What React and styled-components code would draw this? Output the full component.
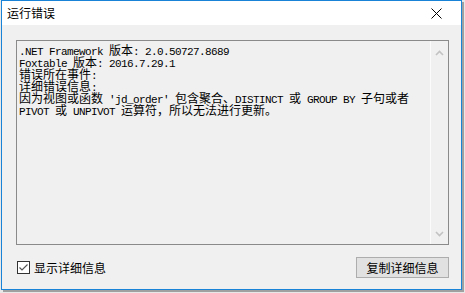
import React from 'react'
import styled, { createGlobalStyle } from 'styled-components'

const GlobalStyle = createGlobalStyle`
  html, body {
    margin: 0;
    padding: 0;
    background: #e8e8e8;
  }
  body {
    width: 465px;
    height: 293px;
    overflow: hidden;
  }
`

const Window = styled.div`
  box-sizing: border-box;
  width: 461px;
  height: 290px;
  margin-left: 1px;
  border: 1px solid #1883d7;
  background: #f0f0f0;
  box-shadow: 2px 2px 0 #a0a0a0;
  display: flex;
  flex-direction: column;
  font-family: "Noto Sans CJK SC", sans-serif;
  font-size: 12px;
  color: #000;
`

const TitleBar = styled.div`
  height: 24px;
  background: #fff;
  display: flex;
  align-items: center;
  justify-content: space-between;
  padding-left: 5px;
`

const Title = styled.span`
  font-size: 12px;
  line-height: 24px;
`

const CloseButton = styled.div`
  width: 46px;
  height: 24px;
  display: flex;
  align-items: center;
  justify-content: center;
  margin-right: 2px;
`

const Body = styled.div`
  flex: 1;
  display: flex;
  flex-direction: column;
  padding: 15px 12px 12px 14px;
  gap: 12px;
`

const TextBox = styled.div`
  box-sizing: border-box;
  height: 205px;
  border: 1px solid #8a8a8a;
  display: flex;
`

const TextArea = styled.div`
  flex: 1;
  padding: 3px 2px;
  font-family: "Liberation Mono", monospace;
  font-size: 11px;
  letter-spacing: -0.6px;
  line-height: 12px;
  white-space: pre;
`

const Line = styled.div`
  height: 12px;
  line-height: 12px;
`

const Cjk = styled.span`
  font-family: "Noto Sans CJK SC", sans-serif;
  font-size: 12px;
  line-height: 12px;
  letter-spacing: 0;
`

const ScrollBar = styled.div`
  width: 17px;
  border-left: 1px solid #fbfbfb;
  display: flex;
  flex-direction: column;
  justify-content: space-between;
  align-items: center;
  padding: 9px 0 7px;
`

const Footer = styled.div`
  display: flex;
  align-items: center;
  justify-content: space-between;
  height: 21px;
`

const CheckLabel = styled.label`
  display: flex;
  align-items: center;
  gap: 4px;
  padding-left: 1px;
  font-size: 12px;
`

const Box = styled.span`
  box-sizing: border-box;
  width: 13px;
  height: 13px;
  border: 1px solid #333;
  background: #fff;
  display: flex;
  align-items: center;
  justify-content: center;
`

const Button = styled.button`
  box-sizing: border-box;
  width: 93px;
  height: 21px;
  background: #e1e1e1;
  border: 1px solid #adadad;
  font-family: "Noto Sans CJK SC", sans-serif;
  font-size: 12px;
  color: #000;
  padding: 0;
`

const lines = [
  '.NET Framework 版本: 2.0.50727.8689',
  'Foxtable 版本: 2016.7.29.1',
  '错误所在事件:',
  '详细错误信息:',
  "因为视图或函数 'jd_order' 包含聚合、DISTINCT 或 GROUP BY 子句或者",
  'PIVOT 或 UNPIVOT 运算符，所以无法进行更新。'
]

const CJK_RUN = /([\u3000-\u303f\u4e00-\u9fff\uff00-\uffef]+)/
const CJK_CHAR = /[\u3000-\u303f\u4e00-\u9fff\uff00-\uffef]/

const renderLine = (text) =>
  text.split(CJK_RUN).map((part, i) =>
    CJK_CHAR.test(part) ? <Cjk key={i}>{part}</Cjk> : part
  )

const Arrow = ({ up }) => (
  <svg width="9" height="6" viewBox="0 0 9 6">
    <polyline
      points={up ? '1,5 4.5,1.5 8,5' : '1,1 4.5,4.5 8,1'}
      fill="none"
      stroke="#c2c2c2"
      strokeWidth="1.6"
    />
  </svg>
)

export default function App() {
  return (
    <>
      <GlobalStyle />
      <Window>
        <TitleBar>
          <Title>运行错误</Title>
          <CloseButton>
            <svg width="11" height="11" viewBox="0 0 11 11">
              <path d="M0.5 0.5 L10.5 10.5 M10.5 0.5 L0.5 10.5" stroke="#000" strokeWidth="1" />
            </svg>
          </CloseButton>
        </TitleBar>
        <Body>
          <TextBox>
            <TextArea>
              {lines.map((l, i) => <Line key={i}>{renderLine(l)}</Line>)}
            </TextArea>
            <ScrollBar>
              <Arrow up />
              <Arrow />
            </ScrollBar>
          </TextBox>
          <Footer>
            <CheckLabel>
              <Box>
                <svg width="11" height="11" viewBox="0 0 11 11">
                  <polyline points="1.5,5.5 4,8 9.5,2.5" fill="none" stroke="#555" strokeWidth="1.2" />
                </svg>
              </Box>
              显示详细信息
            </CheckLabel>
            <Button>复制详细信息</Button>
          </Footer>
        </Body>
      </Window>
    </>
  )
}
